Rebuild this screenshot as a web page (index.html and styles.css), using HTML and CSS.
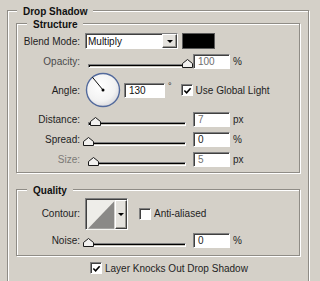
FILE: index.html
```html
<!DOCTYPE html>
<html>
<head>
<meta charset="utf-8">
<link rel="stylesheet" href="styles.css">
</head>
<body>
<div class="group panel">
  <div class="title">Drop Shadow</div>

  <div class="group sub structure">
    <div class="title">Structure</div>

    <div class="row">
      <span class="lbl">Blend Mode:</span>
      <div class="select">
        <span class="sel-text">Multiply</span>
        <span class="drop-btn"><span class="arrow"></span></span>
      </div>
      <div class="swatch"></div>
    </div>

    <div class="row">
      <span class="lbl dim">Opacity:</span>
      <div class="slider">
        <div class="track"></div>
        <svg class="thumb" style="left:93.5px" width="11" height="9" viewBox="0 0 11 9"><path d="M0.5 8.5V4.5L5.5 0.5L10.5 4.5V8.5Z" fill="#f2f1ef" stroke="#1a1a1a"/></svg>
      </div>
      <div class="field grey">100</div><span class="unit">%</span>
    </div>

    <div class="row angle-row">
      <span class="lbl">Angle:</span>
      <svg class="dial" width="36" height="36" viewBox="0 0 36 36">
        <defs>
          <radialGradient id="dg" cx="0.42" cy="0.38" r="0.65">
            <stop offset="0" stop-color="#ffffff"/>
            <stop offset="0.7" stop-color="#f2f2f2"/>
            <stop offset="1" stop-color="#d9d9de"/>
          </radialGradient>
        </defs>
        <circle cx="18" cy="18" r="16.5" fill="url(#dg)" stroke="#536a9c" stroke-width="1.4"/>
        <line x1="18" y1="18" x2="7.4" y2="5.2" stroke="#111" stroke-width="1"/>
        <circle cx="18" cy="18" r="1.5" fill="#000"/>
      </svg>
      <div class="field angle">130</div><span class="deg">°</span>
      <span class="check global"><svg width="10" height="10" viewBox="0 0 10 10"><path d="M1.5 4.5L4 7L8.5 2" fill="none" stroke="#000" stroke-width="1.8"/></svg></span>
      <span class="check-lbl">Use Global Light</span>
    </div>

    <div class="row">
      <span class="lbl">Distance:</span>
      <div class="slider">
        <div class="track"></div>
        <svg class="thumb" style="left:1.5px" width="11" height="9" viewBox="0 0 11 9"><path d="M0.5 8.5V4.5L5.5 0.5L10.5 4.5V8.5Z" fill="#f2f1ef" stroke="#1a1a1a"/></svg>
      </div>
      <div class="field grey">7</div><span class="unit">px</span>
    </div>

    <div class="row">
      <span class="lbl">Spread:</span>
      <div class="slider">
        <div class="track"></div>
        <svg class="thumb" style="left:-5.5px" width="11" height="9" viewBox="0 0 11 9"><path d="M0.5 8.5V4.5L5.5 0.5L10.5 4.5V8.5Z" fill="#f2f1ef" stroke="#1a1a1a"/></svg>
      </div>
      <div class="field">0</div><span class="unit">%</span>
    </div>

    <div class="row">
      <span class="lbl light">Size:</span>
      <div class="slider">
        <div class="track"></div>
        <svg class="thumb" style="left:-0.5px" width="11" height="9" viewBox="0 0 11 9"><path d="M0.5 8.5V4.5L5.5 0.5L10.5 4.5V8.5Z" fill="#f2f1ef" stroke="#1a1a1a"/></svg>
      </div>
      <div class="field grey">5</div><span class="unit">px</span>
    </div>
  </div>

  <div class="group sub quality">
    <div class="title">Quality</div>

    <div class="row contour-row">
      <span class="lbl">Contour:</span>
      <div class="contour">
        <svg class="curve" width="29" height="30" viewBox="0 0 29 30"><rect width="29" height="30" fill="#eeede9"/><path d="M1 29L28 1V29Z" fill="#8a8987"/></svg>
        <span class="c-btn"><span class="arrow"></span></span>
      </div>
      <span class="check aa"></span>
      <span class="check-lbl">Anti-aliased</span>
    </div>

    <div class="row">
      <span class="lbl">Noise:</span>
      <div class="slider">
        <div class="track"></div>
        <svg class="thumb" style="left:-5.5px" width="11" height="9" viewBox="0 0 11 9"><path d="M0.5 8.5V4.5L5.5 0.5L10.5 4.5V8.5Z" fill="#f2f1ef" stroke="#1a1a1a"/></svg>
      </div>
      <div class="field">0</div><span class="unit">%</span>
    </div>
  </div>

  <div class="knock-row">
    <span class="check"><svg width="10" height="10" viewBox="0 0 10 10"><path d="M1.5 4.5L4 7L8.5 2" fill="none" stroke="#000" stroke-width="1.8"/></svg></span>
    <span class="check-lbl">Layer Knocks Out Drop Shadow</span>
  </div>
</div>
</body>
</html>
```

FILE: styles.css
```css
* {
  box-sizing: border-box;
}

html,
body {
  margin: 0;
  padding: 0;
}

body {
  width: 320px;
  height: 281px;
  overflow: hidden;
  background: #d4d0c8;
  font-family: "Liberation Sans", Arial, sans-serif;
  font-size: 10px;
  color: #1e1e1e;
}

/* etched group boxes */
.group {
  border: 1px solid #8f8c86;
  box-shadow: inset 1px 1px #ffffff, 1px 1px #ffffff;
  display: flex;
  flex-direction: column;
}

.panel {
  margin: 10px 0 0 7px;
  width: 302px;
  height: 271px;
  border-bottom: 0;
}

.sub {
  width: 284px;
  margin-left: 8px;
}

.structure {
  margin-top: 5px;
  padding-bottom: 3px;
}

.quality {
  margin-top: 16px;
  padding-bottom: 5px;
}

.title {
  align-self: flex-start;
  font-weight: bold;
  line-height: 13px;
  height: 13px;
  padding: 0 6px;
  background: #d4d0c8;
  margin-top: -6px;
  color: #111;
}

.panel > .title {
  margin-left: 9px;
}

.sub > .title {
  margin-left: 10px;
}

/* rows */
.row {
  display: flex;
  align-items: center;
  height: 20px;
}

.angle-row {
  height: 38px;
}

.contour-row {
  height: 33px;
}

.lbl {
  width: 63px;
  margin-right: 5px;
  text-align: right;
  white-space: nowrap;
}

.lbl.dim {
  color: #4a4a4a;
}

.lbl.light {
  color: #7c7a76;
}

/* select */
.select {
  display: flex;
  align-items: center;
  width: 93px;
  height: 16px;
  background: #fff;
  border: 1px solid;
  border-color: #808080 #ffffff #ffffff #808080;
  box-shadow: inset 1px 1px #404040;
}

.sel-text {
  flex: 1;
  padding-left: 2px;
  padding-top: 1px;
  color: #111;
}

.drop-btn,
.c-btn {
  display: flex;
  align-items: center;
  justify-content: center;
  background: #e4e2dd;
  border: 1px solid;
  border-color: #ffffff #404040 #404040 #ffffff;
  box-shadow: inset -1px -1px #9a9892;
}

.drop-btn {
  width: 15px;
  height: 14px;
}

.arrow {
  width: 0;
  height: 0;
  border-left: 3px solid transparent;
  border-right: 3px solid transparent;
  border-top: 3px solid #000;
}

.swatch {
  width: 33px;
  height: 16px;
  margin-left: 4px;
  background: #000;
  border: 1px solid #5a5a5a;
}

/* sliders */
.slider {
  position: relative;
  width: 98px;
  height: 10px;
  margin-left: 3px;
  margin-top: 3px;
  display: flex;
  align-items: flex-end;
}

.track {
  width: 100%;
  height: 4px;
  border: 1px solid;
  border-color: #808080 #ffffff #ffffff #808080;
  box-shadow: inset 1px 1px #000;
  background: #c8c5bd;
}

.thumb {
  position: absolute;
  bottom: 0;
}

/* text fields */
.field {
  width: 37px;
  height: 15px;
  margin-left: 7px;
  padding: 1px 0 0 4px;
  line-height: 11px;
  background: #fff;
  border: 1px solid;
  border-color: #808080 #ffffff #ffffff #808080;
  box-shadow: inset 1px 1px #404040;
  color: #222;
}

.field.grey {
  color: #6e6e6e;
}

.field.angle {
  width: 41px;
  margin-left: 3px;
  color: #111;
}

.unit {
  margin-left: 3px;
}

.deg {
  align-self: flex-start;
  margin: 10px 0 0 3px;
  font-size: 9px;
}

/* dial */
.dial {
  display: block;
}

/* checkboxes */
.check {
  width: 12px;
  height: 12px;
  background: #fff;
  border: 1px solid;
  border-color: #808080 #ffffff #ffffff #808080;
  box-shadow: inset 1px 1px #404040;
  display: flex;
  align-items: center;
  justify-content: center;
  flex: none;
}

.check svg {
  display: block;
  margin: 1px 0 0 1px;
}

.check.global {
  margin-left: 9px;
}

.check.aa {
  margin-left: 11px;
}

.check-lbl {
  margin-left: 3px;
  white-space: nowrap;
}

/* contour */
.contour {
  display: flex;
  width: 43px;
  height: 32px;
  border: 1px solid;
  border-color: #808080 #ffffff #ffffff #808080;
  box-shadow: inset 1px 1px #404040;
  background: #eeede9;
  padding: 1px 0 0 1px;
}

.curve {
  display: block;
}

.c-btn {
  width: 12px;
  height: 29px;
}

/* bottom option */
.knock-row {
  display: flex;
  align-items: center;
  height: 20px;
  margin-top: 2px;
  padding-left: 82px;
}
```
